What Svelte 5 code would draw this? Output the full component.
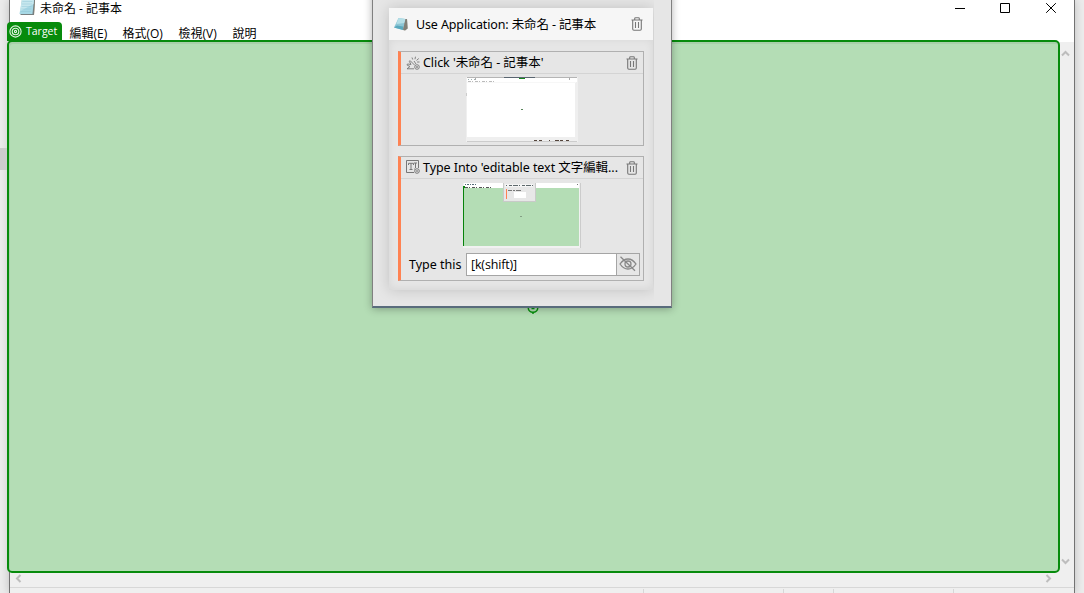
<script>
  const menus = [
    { label: '編輯(E)', w: 38 },
    { label: '格式(O)', w: 41 },
    { label: '檢視(V)', w: 39 },
    { label: '說明', w: 24 }
  ];
</script>

{#snippet trash()}
  <svg class="trash" width="12" height="14" viewBox="0 0 12 14" fill="none" stroke="#777" stroke-width="1.100">
    <path d="M.5 3h11M3.700 2.800V1.500q0-.8.8-.8h3q.8 0 .8.8v1.300M1.700 3v9q0 1.200 1.200 1.200h6.200q1.200 0 1.200-1.200V3M4.500 5v6M7.500 5v6" />
  </svg>
{/snippet}

<main class="screen">
  <span class="notch"></span>
  <section class="window">
    <header class="titlebar">
      <svg class="app-icon" width="17" height="17" viewBox="0 0 17 17">
        <path d="M3 0h13l-1 16H2z" fill="#b08b5c" />
        <path d="M15 1h1l-1 15H1l1-1z" fill="#777f80" />
        <path d="M3 0h12l-1.500 15H.5z" fill="#a7d8e5" />
        <path d="M3 0h12l-.5 5L1.300 12z" fill="#c6e7ee" />
        <path d="M3.400 2.500h10M3 5h10M2.600 7.500h10M2.200 10h10M1.800 12.500h10" stroke="#8cc3d2" stroke-width=".4" />
      </svg>
      <span class="title">未命名 - 記事本</span>
      <svg class="controls" width="104" height="12" viewBox="0 0 104 12" fill="none" stroke="#000" stroke-width="1">
        <path d="M0 6.500h10M45.500 1.500h9v9h-9zM91.200 1.200l9.600 9.600M100.800 1.200l-9.600 9.600" />
      </svg>
    </header>
    <nav class="menubar">
      {#each menus as m}
        <span class="menu" style="width:{m.w}px">{m.label}</span>
      {/each}
    </nav>
    <div class="editor">
      <div class="page"></div>
      <div class="vscroll">
        <svg width="9" height="7" viewBox="0 0 9 7"><path d="M1 5.500l3.500-3.500L8 5.500" /></svg>
        <svg width="9" height="7" viewBox="0 0 9 7"><path d="M1 1.500l3.500 3.500L8 1.500" /></svg>
      </div>
    </div>
    <div class="hscroll">
      <svg width="7" height="9" viewBox="0 0 7 9"><path d="M5.500 1L2 4.500 5.500 8" /></svg>
      <svg width="7" height="9" viewBox="0 0 7 9"><path d="M1.500 1L5 4.500 1.500 8" /></svg>
    </div>
    <footer class="status"><i></i><i></i><i></i><i></i></footer>
  </section>

  <div class="highlight"></div>
  <div class="target">
    <svg width="13" height="13" viewBox="0 0 13 13" fill="none" stroke="#e5f4e5" stroke-width="1.100">
      <circle cx="6.500" cy="6.500" r="5.600" /><circle cx="6.500" cy="6.500" r="3.300" /><circle cx="6.500" cy="6.500" r="1.100" />
    </svg>
    <span>Target</span>
  </div>
  <svg class="anchor" width="12" height="15" viewBox="0 0 12 15" fill="none" stroke="#07900d" stroke-width="1.500">
    <circle cx="6" cy="7.500" r="4.800" /><path d="M6 12v2M4.500 8.600h3" />
  </svg>

  <aside class="panel">
    <section class="activity">
      <header class="activity-head">
        <svg width="14" height="13" viewBox="0 0 14 13">
          <path d="M5 1l8 0 .6 9.500-2.600 2.100L9 11z" fill="#a7a49a" />
          <path d="M4.500 0l7 1L9 12 0 9.500z" fill="#8dc6d5" />
          <path d="M4.500 0l7 1-1 4L2.500 6z" fill="#b5dfe7" />
          <path d="M0 9.500l3-2 6 1L9 12z" fill="#5aa9be" />
          <path d="M11.500 1l1.500 0 .6 9.500L11 12.600 9 12z" fill="#817f77" />
        </svg>
        <span class="a-title">Use Application: 未命名 - 記事本</span>
        {@render trash()}
      </header>
      <div class="cards">
        <article class="card first">
          <header>
            <svg width="14" height="14" viewBox="0 0 14 14" fill="none" stroke="#777" stroke-width=".9">
              <path d="M4.500 5l4.300 4.300M4.500 5q-1-.7-1.200.3L5 8.500 2 8q-1.500.2-.8 1.200L4 10.500 1 12.800h7M6 1.500l.7 2M9.500.7L9 3.200M12.800 2.500L10.500 4.400M13.500 6h-2.400M8 5l2 3" />
              <circle cx="11" cy="11" r="2.300" /><circle cx="11" cy="11" r=".6" />
            </svg>
            <span class="c-title">Click '未命名 - 記事本'</span>
            {@render trash()}
          </header>
          <svg class="thumb" width="112" height="65" viewBox="0 0 112 65" shape-rendering="crispEdges">
            <path d="M0 0h112v65H0z" fill="#efefef" /><path d="M1 1h108v59H1z" fill="#fff" /><path d="M1 0h110v1H1z" fill="#b5b5b5" />
            <path d="M1 1h110v4H1z" fill="#fff" />
            <path d="M38 0h31v1H38z" fill="#596570" /><path d="M53 1h6v1h-6z" fill="#16881c" />
            <path d="M103 1h1v2h-1zM2 2h1M9 1h1v2H9z" fill="#aaa" />
            <path d="M2 2.500h9" stroke="#9db1b3" stroke-dasharray="1 2" /><path d="M2 4.500h26" stroke="#bbb" stroke-dasharray="3 1 1 2" />
            <path d="M1 5h109v1H1z" fill="#f7f7f7" /><path d="M0 16h1v3H0z" fill="#ccc" />
            <path d="M55 32h2v1h-2z" fill="#58845a" />
            <path d="M68 63.500h35" stroke="#55453c" stroke-dasharray="3 2 3 7 1 5 4 1 3 3" />
            <path d="M1 64h110v1H1z" fill="#ccc" />
          </svg>
        </article>
        <article class="card second">
          <header>
            <svg width="14" height="14" viewBox="0 0 14 14" fill="none" stroke="#777" stroke-width="1">
              <path d="M8 12.500H.5V.5h12v7.500M2.500 5V3.300h5V5M5 3.300v6M3.500 9.500h3M8 3h3M9.500 3v5M8.200 9h1" />
              <circle cx="11" cy="11" r="2.300" /><circle cx="11" cy="11" r=".5" />
            </svg>
            <span class="c-title">Type Into 'editable text 文字編輯...</span>
            {@render trash()}
          </header>
          <svg class="thumb wide" width="118" height="65" viewBox="0 0 118 65" shape-rendering="crispEdges">
            <path d="M0 0h118v65H0z" fill="#f1f1f1" /><path d="M1 0h115v5H1z" fill="#fff" />
            <path d="M1 5h115v58H1z" fill="#b4ddb5" /><path d="M0 3h1v60H0zM0 3h2v2H0z" fill="#07830b" />
            <path d="M2 1.500h12" stroke="#526a76" stroke-dasharray="1 1 2 1" /><path d="M2 4.500h26" stroke="#555" stroke-dasharray="3 1 1 2" />
            <path d="M114 1h1v1h-1z" fill="#777" /><path d="M117 0h1v65h-1z" fill="#ccc" />
            <path d="M40 0h33v19H40z" fill="#c8cac8" /><path d="M41 0h31v18H41z" fill="#e7e7e7" />
            <path d="M42 1h28v3H42z" fill="#f5f5f5" /><path d="M43 2.500h27" stroke="#5e696c" stroke-dasharray="1 2 3 1 5 1" />
            <path d="M43 6h1v10h-1z" fill="#ff8252" /><path d="M45 7.500h23" stroke="#777" stroke-dasharray="4 1 2 1 5 11" />
            <path d="M51 9h12v6H51z" fill="#fff" /><path d="M57 33h2v1h-2z" fill="#849f85" />
          </svg>
          <div class="field">
            <label for="keys">Type this</label>
            <div class="input" id="keys">[k(shift)]</div>
            <div class="eye">
              <svg width="18" height="16" viewBox="0 0 18 16" fill="none" stroke="#888" stroke-width="1.300">
                <path d="M1 8q3.500-5 8-5t8 5q-3.500 5-8 5T1 8zM1.500.8l14.500 14" /><circle cx="9" cy="8" r="3" />
              </svg>
            </div>
          </div>
        </article>
      </div>
    </section>
  </aside>
</main>

<style>
  :global(body) { margin: 0; overflow: hidden; }
  .screen {
    position: relative; width: 1084px; height: 593px; overflow: hidden; box-sizing: border-box; padding: 0 9px;
    background: #ececec; color: #000;
    font-family: "Noto Sans", "Noto Sans CJK TC", sans-serif;
  }
  .notch { position: absolute; left: 0; top: 148px; width: 8px; height: 22px; background: #ccc; }
  .window {
    width: 1066px; height: 593px; box-sizing: border-box; display: flex; flex-direction: column;
    border: solid #727272; border-width: 0 1px; background: #fff; box-shadow: 0 0 9px rgba(0, 0, 0, .2);
  }
  .titlebar { display: flex; height: 18px; flex: none; padding: 0 15px 0 9px; align-items: flex-start; }
  .app-icon { margin-top: -1px; }
  .title { margin-left: 4px; font-size: 12px; line-height: 17px; white-space: nowrap; font-family: "Open Sans", "Noto Sans CJK TC", sans-serif; }
  .controls { margin: 2px 0 0 auto; }
  .menubar { display: flex; height: 24px; flex: none; padding-left: 59.500px; gap: 15px; box-sizing: border-box; }
  .menu { font: 12px/31px "Open Sans", "Noto Sans CJK TC", sans-serif; white-space: nowrap; }
  .editor { display: flex; height: 529px; flex: none; }
  .page { flex: 1; }
  .vscroll { width: 17px; background: #efefef; display: flex; flex-direction: column; justify-content: space-between; align-items: center; padding: 8px 0 6px; box-sizing: border-box; }
  .vscroll svg, .hscroll svg { fill: none; stroke: #bdbdbd; stroke-width: 2; }
  .hscroll { height: 16px; box-sizing: border-box; flex: none; display: flex; justify-content: space-between; align-items: flex-start; padding: 3px 22px 0 5px; background: #efefef; }
  .status { flex: 1; display: grid; grid-template-columns: 634px 140px 50px 120px 1fr; border-top: 1px solid #d7d7d7; background: #efefef; padding-top: 1px; }
  .status i { border-right: 1px solid #d7d7d7; }
  .highlight { position: absolute; left: 7px; top: 40px; width: 1053px; height: 533px; box-sizing: border-box; border: 2px solid #078b0c; border-radius: 5px; background: #b4ddb5; box-shadow: inset 1px 2px 0 #a9d0aa; }
  .target { position: absolute; left: 7px; top: 22px; width: 55px; height: 19px; box-sizing: border-box; background: #078b0c; border-radius: 4px 4px 0 0; display: flex; align-items: center; gap: 4px; padding-left: 2px; color: #fff; }
  .target span { font: 10.500px/17px "Open Sans", sans-serif; margin-top: -1px; }
  .anchor { position: absolute; left: 527px; top: 300px; }
  .panel {
    position: absolute; left: 372px; top: -10px; width: 300px; height: 318px; box-sizing: border-box; padding: 17px 19px 16px 16px;
    background: #e6e6e6; border: 1px solid #808080; border-bottom: 2px solid #596c7c; box-shadow: 0 1px 8px rgba(0, 0, 0, .3);
  }
  .activity { width: 264px; height: 282px; box-shadow: 0 0 13px rgba(0, 0, 0, .16); background: #e6e6e6; clip-path: inset(-12px -1px -15px -15px); }
  .activity-head { height: 32px; box-sizing: border-box; padding: 0 10px 0 5px; background: #f6f6f6; display: flex; align-items: center; }
  .a-title { margin-left: 8px; padding-top: 2px; font-size: 12.500px; line-height: 30px; white-space: nowrap; letter-spacing: -.13px; }
  .trash { margin-left: auto; flex: none; }
  .cards { display: flex; flex-direction: column; gap: 10px; height: 250px; box-sizing: border-box; padding: 11px 9px 9px; box-shadow: inset 0 -1px 9px rgba(0, 0, 0, .07); }
  .card { width: 246px; box-sizing: border-box; border: 1px solid #b0b0b0; border-left: 3px solid #ff8252; background: #e6e6e6; }
  .first { height: 95px; }
  .second { height: 126px; }
  .card header { height: 22px; box-sizing: border-box; display: flex; align-items: center; padding: 0 5px; border-bottom: 1px solid #d4d4d4; }
  .second { height: 126px; }
  .second .trash { margin-top: 1px; }
  .c-title { margin-left: 3px; font-size: 12.500px; line-height: 21px; white-space: nowrap; letter-spacing: -.06px; }
  .thumb { display: block; margin: 3px 0 0 65px; }
  .wide { margin-left: 62px; margin-top: 4px; }
  .field { display: flex; height: 23px; margin: 5px 3px 0 8px; align-items: stretch; }
  .field label { width: 57px; font-size: 12.500px; line-height: 24px; white-space: nowrap; }
  .input { width: 151px; box-sizing: border-box; border: 1px solid #a5a5a5; background: #fff; padding-left: 4px; font: 12.500px/21px "Open Sans", sans-serif; letter-spacing: -.15px; }
  .eye { width: 23px; box-sizing: border-box; border: 1px solid #a5a5a5; border-left-width: 0; display: grid; place-items: center; }
</style>
